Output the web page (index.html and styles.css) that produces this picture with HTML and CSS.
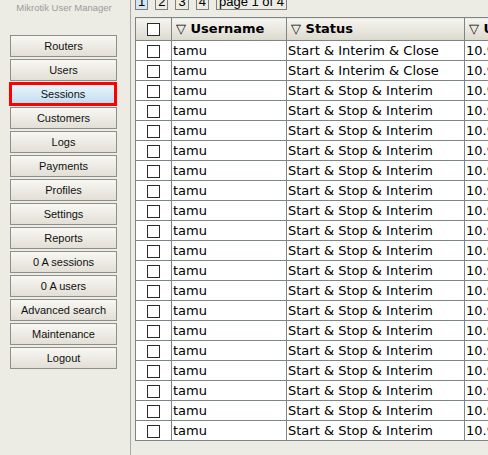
FILE: index.html
```html
<!DOCTYPE html>
<html>
<head>
<meta charset="utf-8">
<title>Mikrotik User Manager - Sessions</title>
<link rel="stylesheet" href="styles.css">
</head>
<body>
<div class="app">
  <aside class="sidebar">
    <div class="brand">Mikrotik User Manager</div>
    <nav class="menu">
      <a class="btn">Routers</a>
      <a class="btn">Users</a>
      <a class="btn current">Sessions</a>
      <a class="btn">Customers</a>
      <a class="btn">Logs</a>
      <a class="btn">Payments</a>
      <a class="btn">Profiles</a>
      <a class="btn">Settings</a>
      <a class="btn">Reports</a>
      <a class="btn">0 A sessions</a>
      <a class="btn">0 A users</a>
      <a class="btn">Advanced search</a>
      <a class="btn">Maintenance</a>
      <a class="btn">Logout</a>
    </nav>
  </aside>
  <main class="content">
    <div class="pager">
      <span class="pg active">1</span>
      <span class="pg">2</span>
      <span class="pg">3</span>
      <span class="pg">4</span>
      <span class="pg">page 1 of 4</span>
    </div>
    <table class="grid">
      <colgroup>
        <col class="c-check"><col class="c-user"><col class="c-status"><col class="c-ip">
      </colgroup>
      <thead>
        <tr>
          <th class="chk"><input type="checkbox" class="box"></th>
          <th>&#9661; Username</th>
          <th>&#9661; Status</th>
          <th>&#9661; User IP</th>
        </tr>
      </thead>
      <tbody>
        <tr><td class="chk"><input type="checkbox" class="box"></td><td>tamu</td><td>Start &amp; Interim &amp; Close</td><td>10.9.1.12</td></tr>
        <tr><td class="chk"><input type="checkbox" class="box"></td><td>tamu</td><td>Start &amp; Interim &amp; Close</td><td>10.9.1.12</td></tr>
        <tr><td class="chk"><input type="checkbox" class="box"></td><td>tamu</td><td>Start &amp; Stop &amp; Interim</td><td>10.9.1.12</td></tr>
        <tr><td class="chk"><input type="checkbox" class="box"></td><td>tamu</td><td>Start &amp; Stop &amp; Interim</td><td>10.9.1.12</td></tr>
        <tr><td class="chk"><input type="checkbox" class="box"></td><td>tamu</td><td>Start &amp; Stop &amp; Interim</td><td>10.9.1.12</td></tr>
        <tr><td class="chk"><input type="checkbox" class="box"></td><td>tamu</td><td>Start &amp; Stop &amp; Interim</td><td>10.9.1.12</td></tr>
        <tr><td class="chk"><input type="checkbox" class="box"></td><td>tamu</td><td>Start &amp; Stop &amp; Interim</td><td>10.9.1.12</td></tr>
        <tr><td class="chk"><input type="checkbox" class="box"></td><td>tamu</td><td>Start &amp; Stop &amp; Interim</td><td>10.9.1.12</td></tr>
        <tr><td class="chk"><input type="checkbox" class="box"></td><td>tamu</td><td>Start &amp; Stop &amp; Interim</td><td>10.9.1.12</td></tr>
        <tr><td class="chk"><input type="checkbox" class="box"></td><td>tamu</td><td>Start &amp; Stop &amp; Interim</td><td>10.9.1.12</td></tr>
        <tr><td class="chk"><input type="checkbox" class="box"></td><td>tamu</td><td>Start &amp; Stop &amp; Interim</td><td>10.9.1.12</td></tr>
        <tr><td class="chk"><input type="checkbox" class="box"></td><td>tamu</td><td>Start &amp; Stop &amp; Interim</td><td>10.9.1.12</td></tr>
        <tr><td class="chk"><input type="checkbox" class="box"></td><td>tamu</td><td>Start &amp; Stop &amp; Interim</td><td>10.9.1.12</td></tr>
        <tr><td class="chk"><input type="checkbox" class="box"></td><td>tamu</td><td>Start &amp; Stop &amp; Interim</td><td>10.9.1.12</td></tr>
        <tr><td class="chk"><input type="checkbox" class="box"></td><td>tamu</td><td>Start &amp; Stop &amp; Interim</td><td>10.9.1.12</td></tr>
        <tr><td class="chk"><input type="checkbox" class="box"></td><td>tamu</td><td>Start &amp; Stop &amp; Interim</td><td>10.9.1.12</td></tr>
        <tr><td class="chk"><input type="checkbox" class="box"></td><td>tamu</td><td>Start &amp; Stop &amp; Interim</td><td>10.9.1.12</td></tr>
        <tr><td class="chk"><input type="checkbox" class="box"></td><td>tamu</td><td>Start &amp; Stop &amp; Interim</td><td>10.9.1.12</td></tr>
        <tr><td class="chk"><input type="checkbox" class="box"></td><td>tamu</td><td>Start &amp; Stop &amp; Interim</td><td>10.9.1.12</td></tr>
        <tr><td class="chk"><input type="checkbox" class="box"></td><td>tamu</td><td>Start &amp; Stop &amp; Interim</td><td>10.9.1.12</td></tr>
      </tbody>
    </table>
  </main>
</div>
</body>
</html>
```

FILE: styles.css
```css
html, body {
  margin: 0;
  padding: 0;
  height: 100%;
  overflow: hidden;
  background: #ecebe4;
}

.app {
  display: flex;
  height: 455px;
}

.sidebar {
  flex: none;
  width: 131px;
  box-sizing: border-box;
  border-right: 1px solid #a9a9a4;
}

.brand {
  height: 16px;
  line-height: 16px;
  padding-right: 2px;
  text-align: center;
  font-family: "Liberation Sans", Arial, sans-serif;
  font-size: 9.5px;
  color: #9c9c9c;
}

.menu {
  display: flex;
  flex-direction: column;
  gap: 2px;
  margin-top: 19px;
  padding-left: 10px;
}

.btn {
  display: flex;
  align-items: center;
  justify-content: center;
  box-sizing: border-box;
  width: 107px;
  height: 22px;
  border: 1px solid #8e8e8a;
  background: linear-gradient(#f8f7f3, #e1dfd5);
  font-family: "Liberation Sans", Arial, sans-serif;
  font-size: 11px;
  color: #111;
  cursor: pointer;
}

.btn.current {
  width: 108px;
  height: 24px;
  margin: -1px 0 -1px -1px;
  border: 3px solid #ff0000;
  background: linear-gradient(#eaf4fb, #c3def1);
}

.content {
  flex: 1;
  min-width: 0;
  padding-left: 4px;
  overflow: hidden;
}

.pager {
  display: flex;
  gap: 7px;
  height: 16px;
  margin-top: -6px;
  margin-bottom: 7px;
}

.pg {
  box-sizing: border-box;
  height: 16px;
  padding: 0 2px;
  border: 1px solid #7f7f7f;
  background: #ecebe4;
  font-family: "Liberation Sans", Arial, sans-serif;
  font-size: 13px;
  line-height: 14px;
  color: #000;
}

.pg.active {
  background: #d4e6f6;
}

.grid {
  border-collapse: collapse;
  table-layout: fixed;
  width: 449px;
  background: #fff;
  font-family: "DejaVu Sans", Verdana, sans-serif;
  font-size: 13px;
  color: #000;
}

.c-check { width: 36px; }
.c-user { width: 115px; }
.c-status { width: 178px; }
.c-ip { width: 120px; }

.grid th,
.grid td {
  border: 1px solid #7c8686;
  padding: 0 1px;
  text-align: left;
  white-space: nowrap;
  overflow: hidden;
}

.grid th {
  height: 22px;
  line-height: 22px;
  padding-left: 4px;
  font-weight: bold;
  background: linear-gradient(#f6f5f0, #dcd9ce);
}

.grid td {
  height: 19px;
  line-height: 19px;
}

.grid .chk {
  text-align: center;
  padding: 0;
}

.box {
  appearance: none;
  -webkit-appearance: none;
  display: inline-block;
  width: 13px;
  height: 13px;
  margin: 0;
  border: 1px solid #2b2b2b;
  background: #fff;
  vertical-align: middle;
  box-sizing: border-box;
}
```
